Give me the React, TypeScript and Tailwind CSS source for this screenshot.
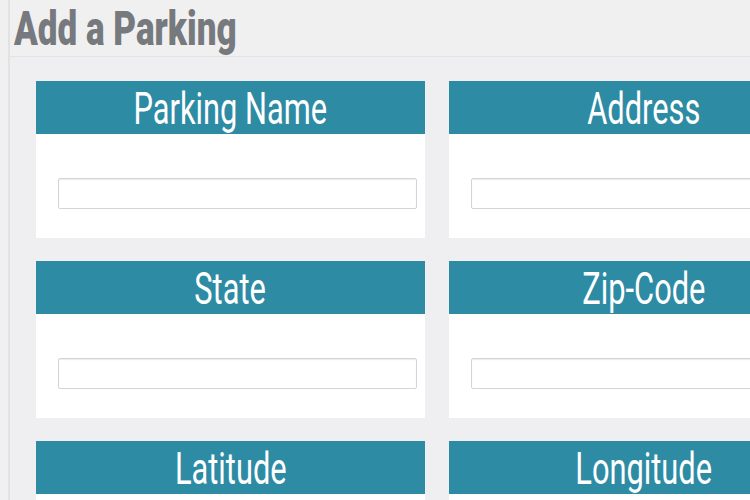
const fields = ['Parking Name', 'Address', 'State', 'Zip-Code', 'Latitude', 'Longitude'];

function FieldCard({ label }: { label: string }) {
  return (
    <div className="flex flex-col">
      <div className="h-[53px] bg-[#2e8ba4] flex items-center justify-center pt-[2px]">
        <span className="font-['Roboto',sans-serif] font-normal text-white text-[44px] leading-none scale-x-[0.7] whitespace-nowrap">
          {label}
        </span>
      </div>
      <div className="h-[104px] bg-white pt-[44px] pl-[22px] pr-[8px]">
        <input
          type="text"
          className="w-full h-[31px] border border-[#d4d4d4] rounded-[2px] bg-white shadow-[inset_0_1px_1px_rgba(0,0,0,0.08)] outline-none"
        />
      </div>
    </div>
  );
}

export default function App() {
  return (
    <div className="w-[750px] h-[500px] overflow-hidden bg-[#f0f0f0]">
      <div className="ml-[8px] h-full border-l-2 border-[#e2e2e2]">
        <div className="h-[57px] border-b border-[#e3e3e3] pl-[4px] pt-[3px]">
          <h1 className="font-['Roboto',sans-serif] font-black text-[#76797d] text-[49px] leading-[52px] scale-x-[0.715] origin-left whitespace-nowrap w-max">
            Add a Parking
          </h1>
        </div>
        <div className="h-full bg-[#efeff2] pl-[26px] pt-[24px]">
          <div className="grid grid-cols-[389px_389px] gap-x-[24px] gap-y-[23px]">
            {fields.map((f) => (
              <FieldCard key={f} label={f} />
            ))}
          </div>
        </div>
      </div>
    </div>
  );
}
